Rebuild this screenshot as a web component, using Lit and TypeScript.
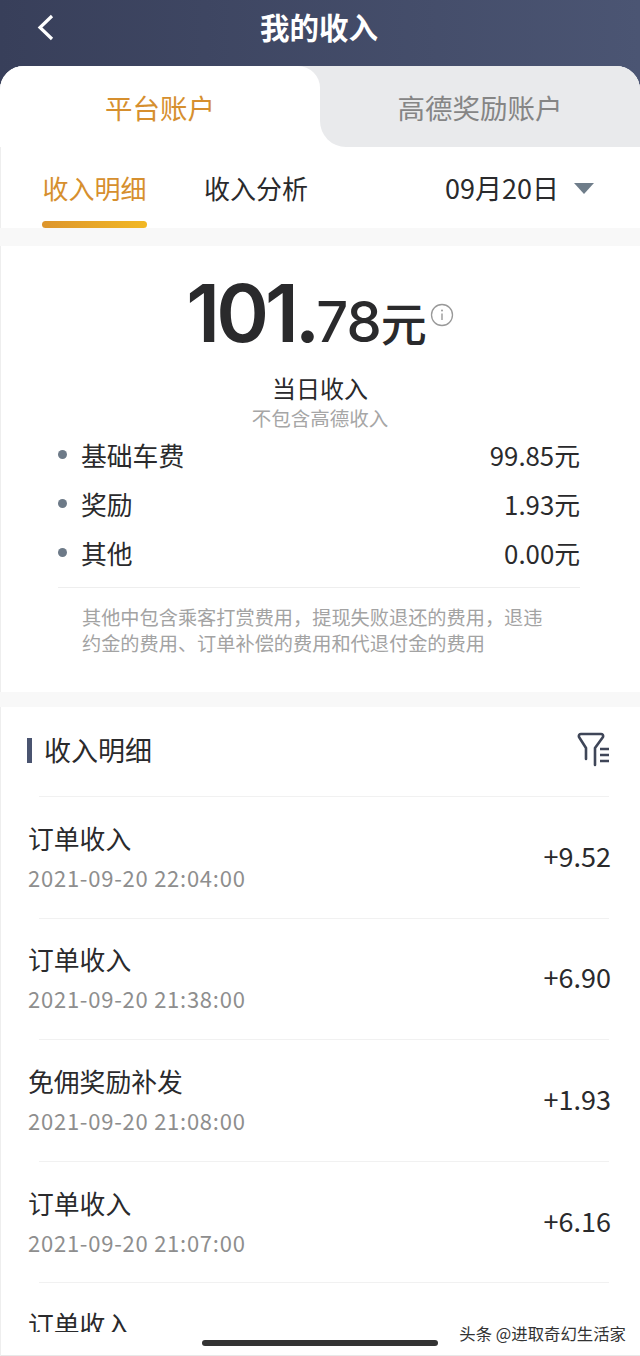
import { LitElement, html, css } from "lit";
import { customElement } from "lit/decorators.js";

const rows = [
  ["订单收入", "2021-09-20 22:04:00", "+9.52"],
  ["订单收入", "2021-09-20 21:38:00", "+6.90"],
  ["免佣奖励补发", "2021-09-20 21:08:00", "+1.93"],
  ["订单收入", "2021-09-20 21:07:00", "+6.16"],
];
const items = [
  ["基础车费", "99.85元"],
  ["奖励", "1.93元"],
  ["其他", "0.00元"],
];

@customElement("app-root")
export class AppRoot extends LitElement {
  static styles = css`
    :host {
      display: block;
      width: 640px;
      height: 1356px;
      position: relative;
      overflow: hidden;
      background: linear-gradient(90deg, #383f5a, #4b5573);
      font-family: "Noto Sans CJK SC", "Noto Sans", sans-serif;
      color: #2a2a2c;
    }
    .top {
      height: 66px;
      display: flex;
      align-items: center;
      justify-content: center;
      position: relative;
    }
    .top h1 {
      margin: 0 2px 14px 0;
      font-size: 29.5px;
      font-weight: 700;
      line-height: 40px;
      color: #fff;
    }
    .back {
      position: absolute;
      left: 37px;
      top: 13px;
    }
    .card {
      height: 1290px;
      background: #fff;
      border-radius: 24px 24px 0 0;
      overflow: hidden;
      box-shadow: inset 1px 0 0 #eeeeee, inset 0 -1px 0 #e8e8e8;
    }
    .tabs {
      display: grid;
      grid-template-columns: 320px 320px;
      height: 81px;
      background: linear-gradient(#e9eaec 50%, #fff 50%);
    }
    .tab {
      display: flex;
      align-items: center;
      justify-content: center;
      font-size: 27.5px;
      line-height: 36px;
    }
    .tab.on {
      background: #fff;
      border-top-right-radius: 22px;
      color: #d68f2e;
    }
    .tab.off {
      background: #e9eaec;
      border-bottom-left-radius: 26px;
      color: #858585;
    }
    .sub {
      height: 81px;
      display: flex;
      align-items: flex-start;
      padding: 23px 46px 0 42px;
      box-sizing: border-box;
      font-size: 26px;
      line-height: 36px;
    }
    .sub .active {
      width: 105px;
      height: 58px;
      color: #d68f2e;
      position: relative;
      text-align: center;
    }
    .sub .active::after {
      content: "";
      position: absolute;
      left: 0;
      bottom: 0;
      width: 105px;
      height: 7px;
      border-radius: 4px;
      background: linear-gradient(90deg, #dd952c, #f2b824);
    }
    .sub .other {
      margin-left: 57px;
    }
    .date {
      margin-left: auto;
      display: flex;
      align-items: center;
      gap: 15px;
      font-size: 27px;
    }
    .tri {
      width: 0;
      height: 0;
      border: 10px solid transparent;
      border-top: 11px solid #6f7d8a;
      border-bottom: 0;
    }
    .band {
      height: 18px;
      background: #f8f8f8;
    }
    .band.b2 {
      height: 15px;
    }
    .sum {
      height: 446px;
      box-sizing: border-box;
      padding-top: 23px;
    }
    .amount {
      display: flex;
      justify-content: center;
      align-items: baseline;
      height: 86px;
      line-height: 86px;
    }
    .big {
      font-family: Inter, sans-serif;
      font-size: 80px;
      font-weight: 600;
      letter-spacing: -4px;
      position: relative;
      top: 1px;
    }
    .mid {
      font-family: Inter, sans-serif;
      font-size: 56px;
      font-weight: 500;
      letter-spacing: -1px;
      position: relative;
      top: 1px;
    }
    .yuan {
      font-size: 46px;
      font-weight: 500;
    }
    .info {
      align-self: center;
      margin-left: 3px;
      margin-top: 6px;
    }
    .label {
      text-align: center;
      font-size: 24px;
      line-height: 32px;
      margin-top: 17px;
    }
    .hint {
      text-align: center;
      font-size: 19.5px;
      line-height: 26px;
      color: #a6a6a6;
      margin-top: 1px;
    }
    .items {
      margin: -1px 60px 0 58px;
      border-bottom: 1px solid #eeeeee;
      padding-bottom: 10px;
    }
    .item {
      display: flex;
      align-items: center;
      height: 49px;
      font-size: 25.8px;
    }
    .dot {
      width: 9px;
      height: 9px;
      border-radius: 50%;
      background: #6d7a88;
      margin-right: 14px;
    }
    .item .v {
      margin-left: auto;
    }
    .note {
      margin: 16px 90px 0 82px;
      font-size: 19.2px;
      line-height: 26px;
      color: #a3a3a3;
    }
    .head {
      height: 89px;
      display: flex;
      align-items: center;
      padding: 0 29px 3px 27px;
      box-sizing: border-box;
      font-size: 27px;
      line-height: 36px;
    }
    .bar {
      width: 5px;
      height: 25px;
      background: #4a5470;
      margin-right: 12px;
    }
    .head svg {
      margin-left: auto;
    }
    .list {
      height: 536px;
      overflow: hidden;
    }
    .row {
      height: 121.6px;
      box-sizing: border-box;
      display: flex;
      align-items: center;
      position: relative;
      padding: 0 29px 2px 28px;
    }
    .row.cut {
      align-items: flex-start;
      padding-top: 24px;
    }
    .row::before {
      content: "";
      position: absolute;
      left: 39px;
      right: 31px;
      top: 0;
      border-top: 1px solid #f1f1f1;
    }
    .name {
      font-size: 25.8px;
      line-height: 36px;
    }
    .time {
      font-size: 22px;
      line-height: 30px;
      color: #8e8e8e;
      margin-top: 6px;
      letter-spacing: 0.75px;
    }
    .amt {
      margin-left: auto;
      font-size: 27px;
      line-height: 36px;
    }
    .home {
      position: absolute;
      left: 202px;
      top: 1340px;
      width: 236px;
      height: 6px;
      border-radius: 3px;
      background: #333;
    }
    .mark {
      position: absolute;
      right: 14px;
      top: 1321px;
      font-size: 16.4px;
      line-height: 24px;
      color: #333;
      white-space: nowrap;
    }
  `;

  render() {
    return html`
      <div class="top">
        <svg class="back" width="18" height="30" viewBox="0 0 18 30">
          <path d="M15 3 3 14.5 15 26" fill="none" stroke="#fff" stroke-width="3.2" />
        </svg>
        <h1>我的收入</h1>
      </div>
      <div class="card">
        <div class="tabs">
          <div class="tab on">平台账户</div>
          <div class="tab off">高德奖励账户</div>
        </div>
        <div class="sub">
          <div class="active">收入明细</div>
          <div class="other">收入分析</div>
          <div class="date">09月20日<span class="tri"></span></div>
        </div>
        <div class="band"></div>
        <div class="sum">
          <div class="amount">
            <span class="big">101.</span><span class="mid">78</span><span class="yuan">元</span>
            <svg class="info" width="24" height="24" viewBox="0 0 24 24">
              <circle cx="12" cy="12" r="10.5" fill="none" stroke="#999" stroke-width="1.3" />
              <circle cx="12" cy="7.500" r="1" fill="#999" />
              <path d="M12 10.500V17" stroke="#999" stroke-width="1.4" />
            </svg>
          </div>
          <div class="label">当日收入</div>
          <div class="hint">不包含高德收入</div>
          <div class="items">
            ${items.map(
              ([k, v]) => html`<div class="item"><span class="dot"></span>${k}<span class="v">${v}</span></div>`
            )}
          </div>
          <div class="note">其他中包含乘客打赏费用，提现失败退还的费用，退违约金的费用、订单补偿的费用和代退付金的费用</div>
        </div>
        <div class="band b2"></div>
        <div class="head">
          <span class="bar"></span>收入明细
          <svg width="34" height="36" viewBox="0 0 34 36">
            <path d="M9 27V16L2 5C1.500 3 2.500 2 4 2H24C25.500 2 26.500 3 26 5L18 16V33" fill="none" stroke="#3f4658" stroke-width="2.6" stroke-linecap="round" stroke-linejoin="round" />
            <path d="M23 17H32M23 23H32M23 29H32" fill="none" stroke="#3f4658" stroke-width="2.6" />
          </svg>
        </div>
        <div class="list">
          ${rows.map(
            ([n, t, a]) => html`<div class="row">
              <div>
                <div class="name">${n}</div>
                <div class="time">${t}</div>
              </div>
              <div class="amt">${a}</div>
            </div>`
          )}
          <div class="row cut"><div class="name">订单收入</div></div>
        </div>
      </div>
      <div class="home"></div>
      <div class="mark">头条 @进取奇幻生活家</div>
    `;
  }
}
